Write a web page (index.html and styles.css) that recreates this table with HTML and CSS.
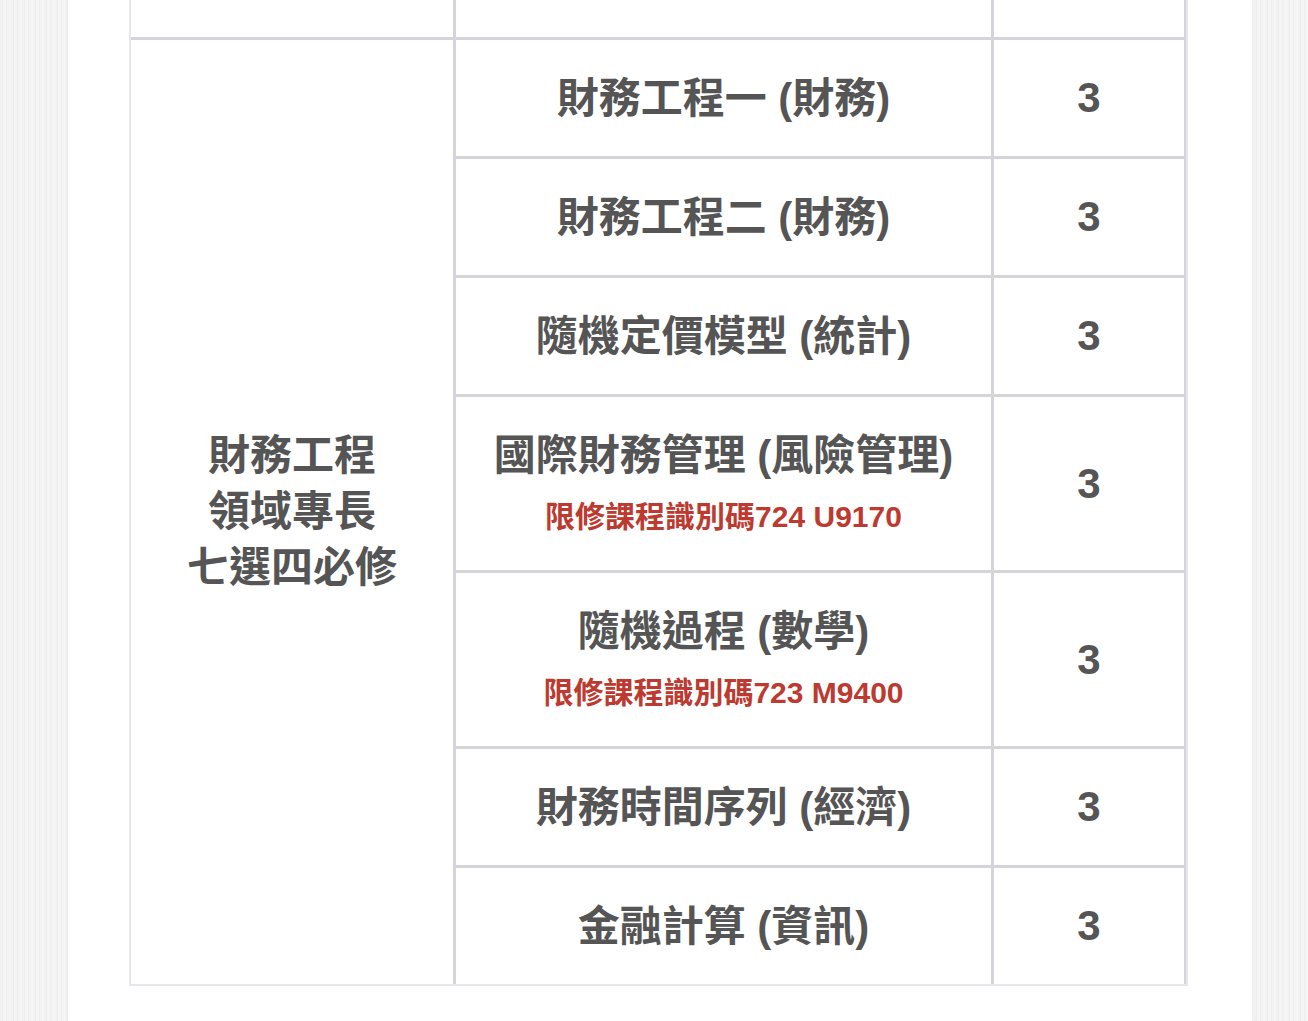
FILE: index.html
```html
<!DOCTYPE html>
<html lang="zh-Hant">
<head>
<meta charset="utf-8">
<title>財務工程領域專長</title>
<link rel="stylesheet" href="styles.css">
</head>
<body>
<div class="page">
  <div class="sheet">
    <div class="grid">
      <div class="cell c1 top"></div>
      <div class="cell c2 top"></div>
      <div class="cell c3 top"></div>

      <div class="cell c1 field">財務工程<br>領域專長<br>七選四必修</div>

      <div class="cell c2 r"><div class="name">財務工程一 (財務)</div></div>
      <div class="cell c3 r">3</div>

      <div class="cell c2 r"><div class="name">財務工程二 (財務)</div></div>
      <div class="cell c3 r">3</div>

      <div class="cell c2 r"><div class="name">隨機定價模型 (統計)</div></div>
      <div class="cell c3 r">3</div>

      <div class="cell c2 r tall"><div class="name">國際財務管理 (風險管理)</div><div class="note">限修課程識別碼724 U9170</div></div>
      <div class="cell c3 r tall">3</div>

      <div class="cell c2 r tall"><div class="name">隨機過程 (數學)</div><div class="note">限修課程識別碼723 M9400</div></div>
      <div class="cell c3 r tall">3</div>

      <div class="cell c2 r"><div class="name">財務時間序列 (經濟)</div></div>
      <div class="cell c3 r">3</div>

      <div class="cell c2 r"><div class="name">金融計算 (資訊)</div></div>
      <div class="cell c3 r">3</div>
    </div>
  </div>
</div>
</body>
</html>
```
FILE: styles.css
```css
html, body {
  margin: 0;
  padding: 0;
}
body {
  height: 1021px;
  overflow: hidden;
  background-color: #f1f1f1;
  background-image:
    repeating-linear-gradient(90deg,
      #f2f2f2 0px, #f2f2f2 2px,
      #ededed 2px, #ededed 3px,
      #f5f5f5 3px, #f5f5f5 6px,
      #efefef 6px, #efefef 7px,
      #f3f3f3 7px, #f3f3f3 9px,
      #f6f6f6 9px, #f6f6f6 11px);
  font-family: "Liberation Sans", "Noto Sans CJK TC", sans-serif;
}
.page {
  margin-left: 68px;
  width: 1184px;
  height: 1021px;
  background: #ffffff;
  box-shadow: 0 0 3px rgba(0, 0, 0, 0.08);
}
.sheet {
  padding: 0 63px 0 61px;
}
.grid {
  display: grid;
  width: 1059px;
  box-sizing: border-box;
  grid-template-columns: 325px 538px 192px;
  grid-template-rows: 37px 119px 119px 119px 176px 176px 119px 119px;
  border: 2px solid #e6e6eb;
  border-top: none;
}
.cell {
  box-sizing: border-box;
  display: flex;
  flex-direction: column;
  justify-content: center;
  align-items: center;
  text-align: center;
  color: #555555;
  font-weight: bold;
  font-size: 42px;
  border-right: 3px solid #d4d4da;
}
.c3 {
  border-right-width: 2px;
}
.r, .field {
  border-top: 3px solid #d4d4da;
}
.field {
  grid-column: 1;
  grid-row: 2 / span 7;
  line-height: 56px;
}
.name {
  line-height: 53px;
}
.note {
  margin-top: 12px;
  font-size: 30px;
  line-height: 45px;
  color: #bd3a30;
}
```
